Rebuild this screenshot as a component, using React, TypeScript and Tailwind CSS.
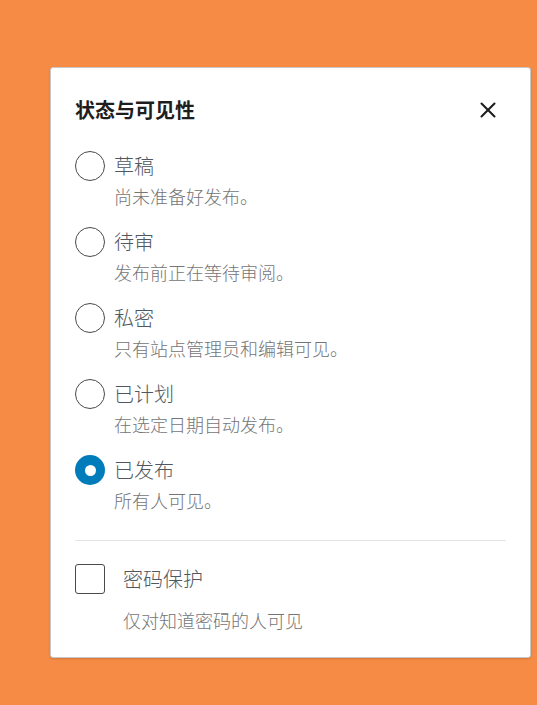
import { X } from 'lucide-react';

const statuses = [
  { id: 'draft', label: '草稿', hint: '尚未准备好发布。' },
  { id: 'pending', label: '待审', hint: '发布前正在等待审阅。' },
  { id: 'private', label: '私密', hint: '只有站点管理员和编辑可见。' },
  { id: 'future', label: '已计划', hint: '在选定日期自动发布。' },
  { id: 'publish', label: '已发布', hint: '所有人可见。' },
];

const font = { fontFamily: '"Noto Sans CJK SC", "Noto Sans", sans-serif' };

function Radio({ checked }: { checked: boolean }) {
  if (checked) {
    return (
      <span className="flex h-[30px] w-[30px] shrink-0 items-center justify-center rounded-full bg-[#007cba]">
        <span className="h-[11px] w-[11px] rounded-full bg-white" />
      </span>
    );
  }
  return <span className="h-[30px] w-[30px] shrink-0 rounded-full border-[1.5px] border-[#4a4a4a] bg-white" />;
}

export default function App() {
  const current = 'publish';

  return (
    <div className="min-h-[705px] bg-[#f68b45] pl-[50px] pr-[6px] pt-[67px]" style={font}>
      <div className="flex h-[591px] w-[481px] flex-col rounded-[3px] border border-[#c8c8c8] bg-white px-[24px] shadow-[0_1px_2px_rgba(0,0,0,0.15)]">
        <div className="flex items-center justify-between pt-[28px]">
          <h2 className="text-[20px] font-bold leading-[28px] text-[#1e1e1e]">状态与可见性</h2>
          <button type="button" className="mr-[5px] text-[#1e1e1e]">
            <X size={26} strokeWidth={1.9} />
          </button>
        </div>

        <div className="mt-[27px] flex flex-col">
          {statuses.map((s) => (
            <div key={s.id} className="flex h-[76px] flex-col">
              <div className="flex items-center gap-[9px]">
                <Radio checked={s.id === current} />
                <span className="text-[20px] font-light leading-[30px] text-[#50575e]">{s.label}</span>
              </div>
              <div className="mt-[3px] pl-[39px] text-[18px] font-light leading-[24px] text-[#757575]">{s.hint}</div>
            </div>
          ))}
        </div>

        <div className="mt-[9px] border-t border-[#e4e4e4]" />

        <div className="mt-[23px] flex items-center gap-[18px]">
          <span className="h-[30px] w-[30px] shrink-0 rounded-[3px] border-[1.5px] border-[#4a4a4a] bg-white" />
          <span className="text-[20px] font-light leading-[30px] text-[#50575e]">密码保护</span>
        </div>
        <div className="mt-[14px] pl-[48px] text-[18px] font-light leading-[24px] text-[#757575]">仅对知道密码的人可见</div>
      </div>
    </div>
  );
}
